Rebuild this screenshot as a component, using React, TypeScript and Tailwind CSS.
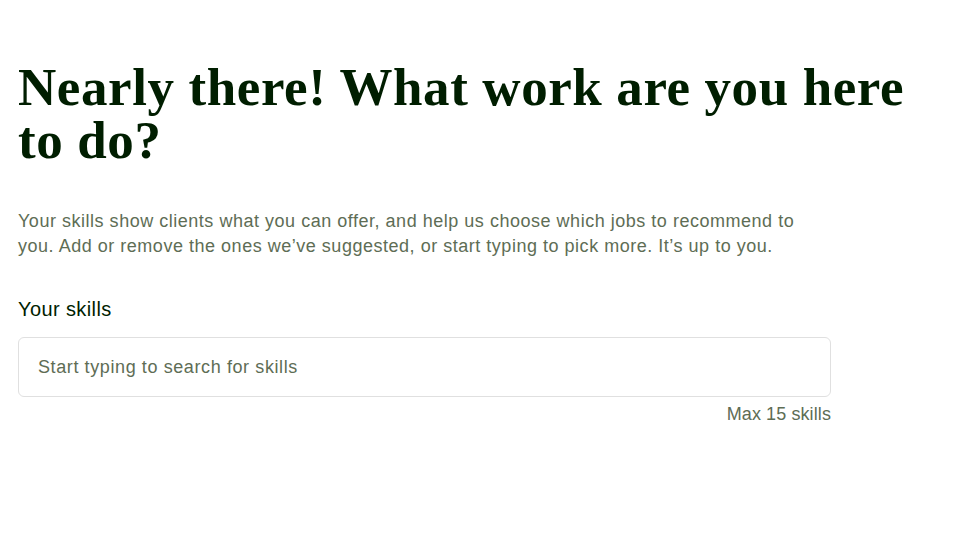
export default function App() {
  return (
    <div className="min-h-[552px] bg-white pl-[18px] pr-[18px]" style={{ fontFamily: '"Liberation Sans", Arial, sans-serif' }}>
      <h1
        className="pt-[61px] text-[53px] font-bold leading-[53px] tracking-[0.6px] text-[#001e00]"
        style={{ fontFamily: '"Liberation Serif", "Times New Roman", serif' }}
      >
        Nearly there! What work are you here to do?
      </h1>
      <div className="w-[813px]">
        <p className="mt-[42px] text-[18px] leading-[25px] tracking-[0.52px] text-[#5e6d55]">
          Your skills show clients what you can offer, and help us choose which jobs to recommend to you. Add or remove the ones we’ve suggested, or start typing to pick more. It’s up to you.
        </p>
        <div className="mt-[38px] text-[20px] leading-[24px] tracking-[0.4px] text-[#001e00]">Your skills</div>
        <div className="mt-[16px] flex h-[60px] items-center rounded-[6px] border border-[#e0e0e0] px-[19px] text-[18px] tracking-[0.6px] text-[#5e6d55]">
          Start typing to search for skills
        </div>
        <div className="mt-[5px] text-right text-[18px] leading-[24px] tracking-[0.1px] text-[#5e6d55]">Max 15 skills</div>
      </div>
    </div>
  );
}
